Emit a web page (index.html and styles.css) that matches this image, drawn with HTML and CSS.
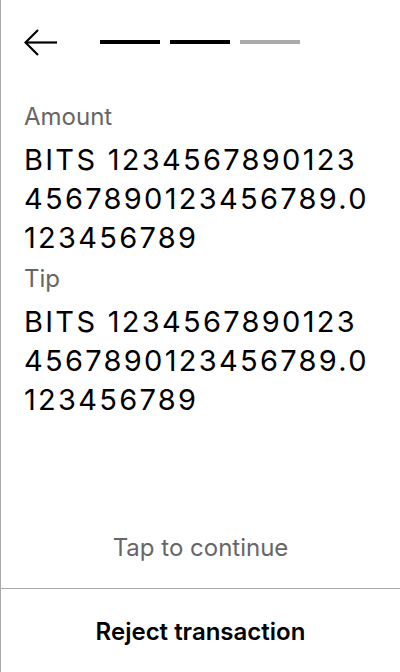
FILE: index.html
```html
<!DOCTYPE html>
<html>
<head>
<meta charset="utf-8">
<link rel="stylesheet" href="styles.css">
</head>
<body>
<div class="screen">
  <div class="header">
    <svg class="back" width="34" height="28" viewBox="0 0 34 28" fill="none" stroke="#000" stroke-width="2.2">
      <path d="M1.5 13.5 H33"/>
      <path d="M14 1 L1.5 13.5 L14 26"/>
    </svg>
    <div class="steps">
      <span class="step done"></span>
      <span class="step done"></span>
      <span class="step"></span>
    </div>
  </div>
  <div class="content">
    <div class="label">Amount</div>
    <div class="value">BITS 12345678901234567890123456789.0123456789</div>
    <div class="label">Tip</div>
    <div class="value">BITS 12345678901234567890123456789.0123456789</div>
  </div>
  <div class="tap">Tap to continue</div>
  <div class="reject">Reject transaction</div>
</div>
</body>
</html>
```
FILE: styles.css
```css
html, body {
  margin: 0;
  padding: 0;
  background: #fff;
}
.screen {
  width: 400px;
  height: 672px;
  box-sizing: border-box;
  border-left: 1px solid #aaa;
  display: flex;
  flex-direction: column;
  font-family: Inter, "Noto Sans", sans-serif;
  color: #000;
}
.header {
  display: flex;
  align-items: center;
  padding: 29px 0 0 23px;
  height: 28px;
}
.back {
  display: block;
}
.steps {
  display: flex;
  gap: 10px;
  margin-left: 42px;
  margin-top: -3px;
}
.step {
  width: 60px;
  height: 4px;
  background: #aaa;
}
.step.done {
  background: #000;
}
.content {
  padding: 44px 0 0 23px;
  flex: 1;
}
.label {
  font-size: 24px;
  line-height: 32px;
  color: #666;
  margin-bottom: 7px;
}
.value {
  width: 348px;
  font-size: 29px;
  line-height: 39px;
  letter-spacing: 2.3px;
  margin-bottom: 6px;
  word-break: break-all;
}
.tap {
  text-align: center;
  font-size: 24px;
  color: #666;
  line-height: 32px;
  padding-bottom: 24px;
}
.reject {
  border-top: 1px solid #aaa;
  text-align: center;
  font-size: 24px;
  font-weight: 600;
  height: 83px;
  line-height: 86px;
}
```
